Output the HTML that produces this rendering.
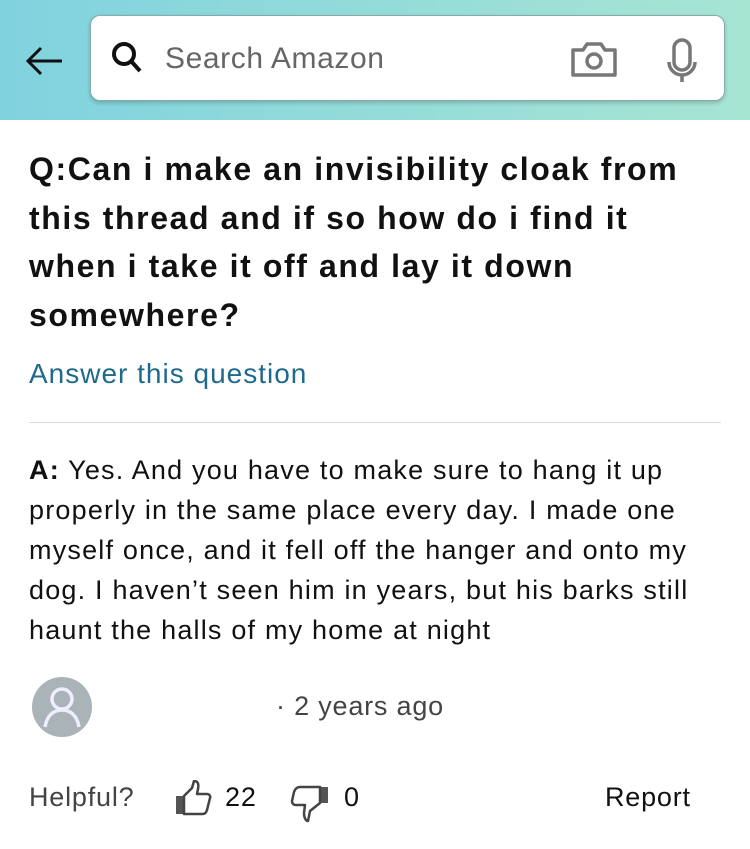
<!DOCTYPE html>
<html><head><meta charset="utf-8"><style>
body{margin:0;width:750px;height:849px;background:#fff;font-family:"Liberation Sans",sans-serif;position:relative;overflow:hidden}
.hdr{position:absolute;left:0;top:0;width:750px;height:120px;background:linear-gradient(90deg,#80d2df,#a7e5d3)}
.box{position:absolute;left:90px;top:15px;width:633px;height:84px;background:#fff;border-radius:10px;border:1px solid #8aa;box-shadow:0 2px 4px rgba(0,0,0,.2)}
.ph{position:absolute;left:74px;top:26px;font-size:30px;color:#666;letter-spacing:0.6px}
.q{position:absolute;left:29px;top:145px;font-size:32px;letter-spacing:1.6px;font-weight:bold;line-height:48.5px;color:#111;white-space:nowrap}
.link{position:absolute;left:29px;top:358px;font-size:28px;letter-spacing:1px;color:#1e6a8a}
.hr{position:absolute;left:29px;right:29px;top:422px;height:1px;background:#ddd}
.a{position:absolute;left:29px;top:450px;font-size:27px;letter-spacing:1.2px;line-height:40px;color:#111;white-space:nowrap}
.av{position:absolute;left:32px;top:677px;width:60px;height:60px;border-radius:50%;background:#a9b3b8}
.t{position:absolute;font-size:27px;color:#333;letter-spacing:0.8px}
</style></head><body>
<div class="hdr">
<svg style="position:absolute;left:24px;top:45px" width="40" height="32" viewBox="0 0 40 32"><path d="M38 16H4M17 3L4 16l13 13" stroke="#111" stroke-width="3" fill="none"/></svg>
<div class="box">
<svg style="position:absolute;left:20px;top:25px" width="34" height="34" viewBox="0 0 34 34"><circle cx="13" cy="13" r="10" stroke="#111" stroke-width="4" fill="none"/><path d="M20 20l9 10" stroke="#111" stroke-width="4"/></svg>
<div class="ph">Search Amazon</div>
<svg style="position:absolute;left:479px;top:24px" width="48" height="38" viewBox="0 0 48 38"><path d="M3 10h10l4-6h14l4 6h10v25H3z" stroke="#777" stroke-width="3.5" fill="none" stroke-linejoin="round"/><circle cx="24" cy="21" r="7" stroke="#777" stroke-width="3.5" fill="none"/></svg>
<svg style="position:absolute;left:575px;top:22px" width="32" height="46" viewBox="0 0 32 46"><rect x="8" y="2" width="16" height="30" rx="8" stroke="#777" stroke-width="3.5" fill="none"/><path d="M3 24a13 13 0 0 0 26 0M16 37v7" stroke="#777" stroke-width="3.5" fill="none"/></svg>
</div></div>
<div class="q">Q:Can i make an invisibility cloak from<br>this thread and if so how do i find it<br>when i take it off and lay it down<br>somewhere?</div>
<div class="link">Answer this question</div>
<div class="hr"></div>
<div class="a"><b>A:</b> Yes. And you have to make sure to hang it up<br>properly in the same place every day. I made one<br>myself once, and it fell off the hanger and onto my<br>dog. I haven’t seen him in years, but his barks still<br>haunt the halls of my home at night</div>
<div class="av"><svg width="60" height="60" viewBox="0 0 60 60"><circle cx="30" cy="22" r="10" stroke="#eef" stroke-width="3.5" fill="none"/><path d="M13 50c2-12 9-17 17-17s15 5 17 17" stroke="#eef" stroke-width="3.5" fill="none"/></svg></div>
<div class="t" style="left:276px;top:691px;color:#444">· 2 years ago</div>
<div class="t" style="left:29px;top:782px;color:#444">Helpful?</div>
<svg style="position:absolute;left:174px;top:780px" width="40" height="38" viewBox="0 0 40 38"><rect x="2" y="16" width="7" height="18" fill="#555"/><path d="M10 16l8-8 2-7c4 0 5 3 4 8l-1 5h10c2 0 4 2 3 4l-3 12c-1 3-2 4-5 4H10z" stroke="#444" stroke-width="2.5" fill="none" stroke-linejoin="round"/></svg>
<div class="t" style="left:225px;top:782px;color:#111">22</div>
<svg style="position:absolute;left:290px;top:784px" width="40" height="40" viewBox="0 0 40 40"><rect x="31" y="3" width="7" height="16" fill="#555"/><path d="M30 3H10C7 3 5 5 4 8L2 17c0 3 2 4 4 4h9l-1 8c0 5 2 8 4 8l2-10 10-8z" stroke="#444" stroke-width="2.5" fill="none" stroke-linejoin="round"/></svg>
<div class="t" style="left:344px;top:782px;color:#111">0</div>
<div class="t" style="left:605px;top:782px;color:#111">Report</div>
</body></html>
